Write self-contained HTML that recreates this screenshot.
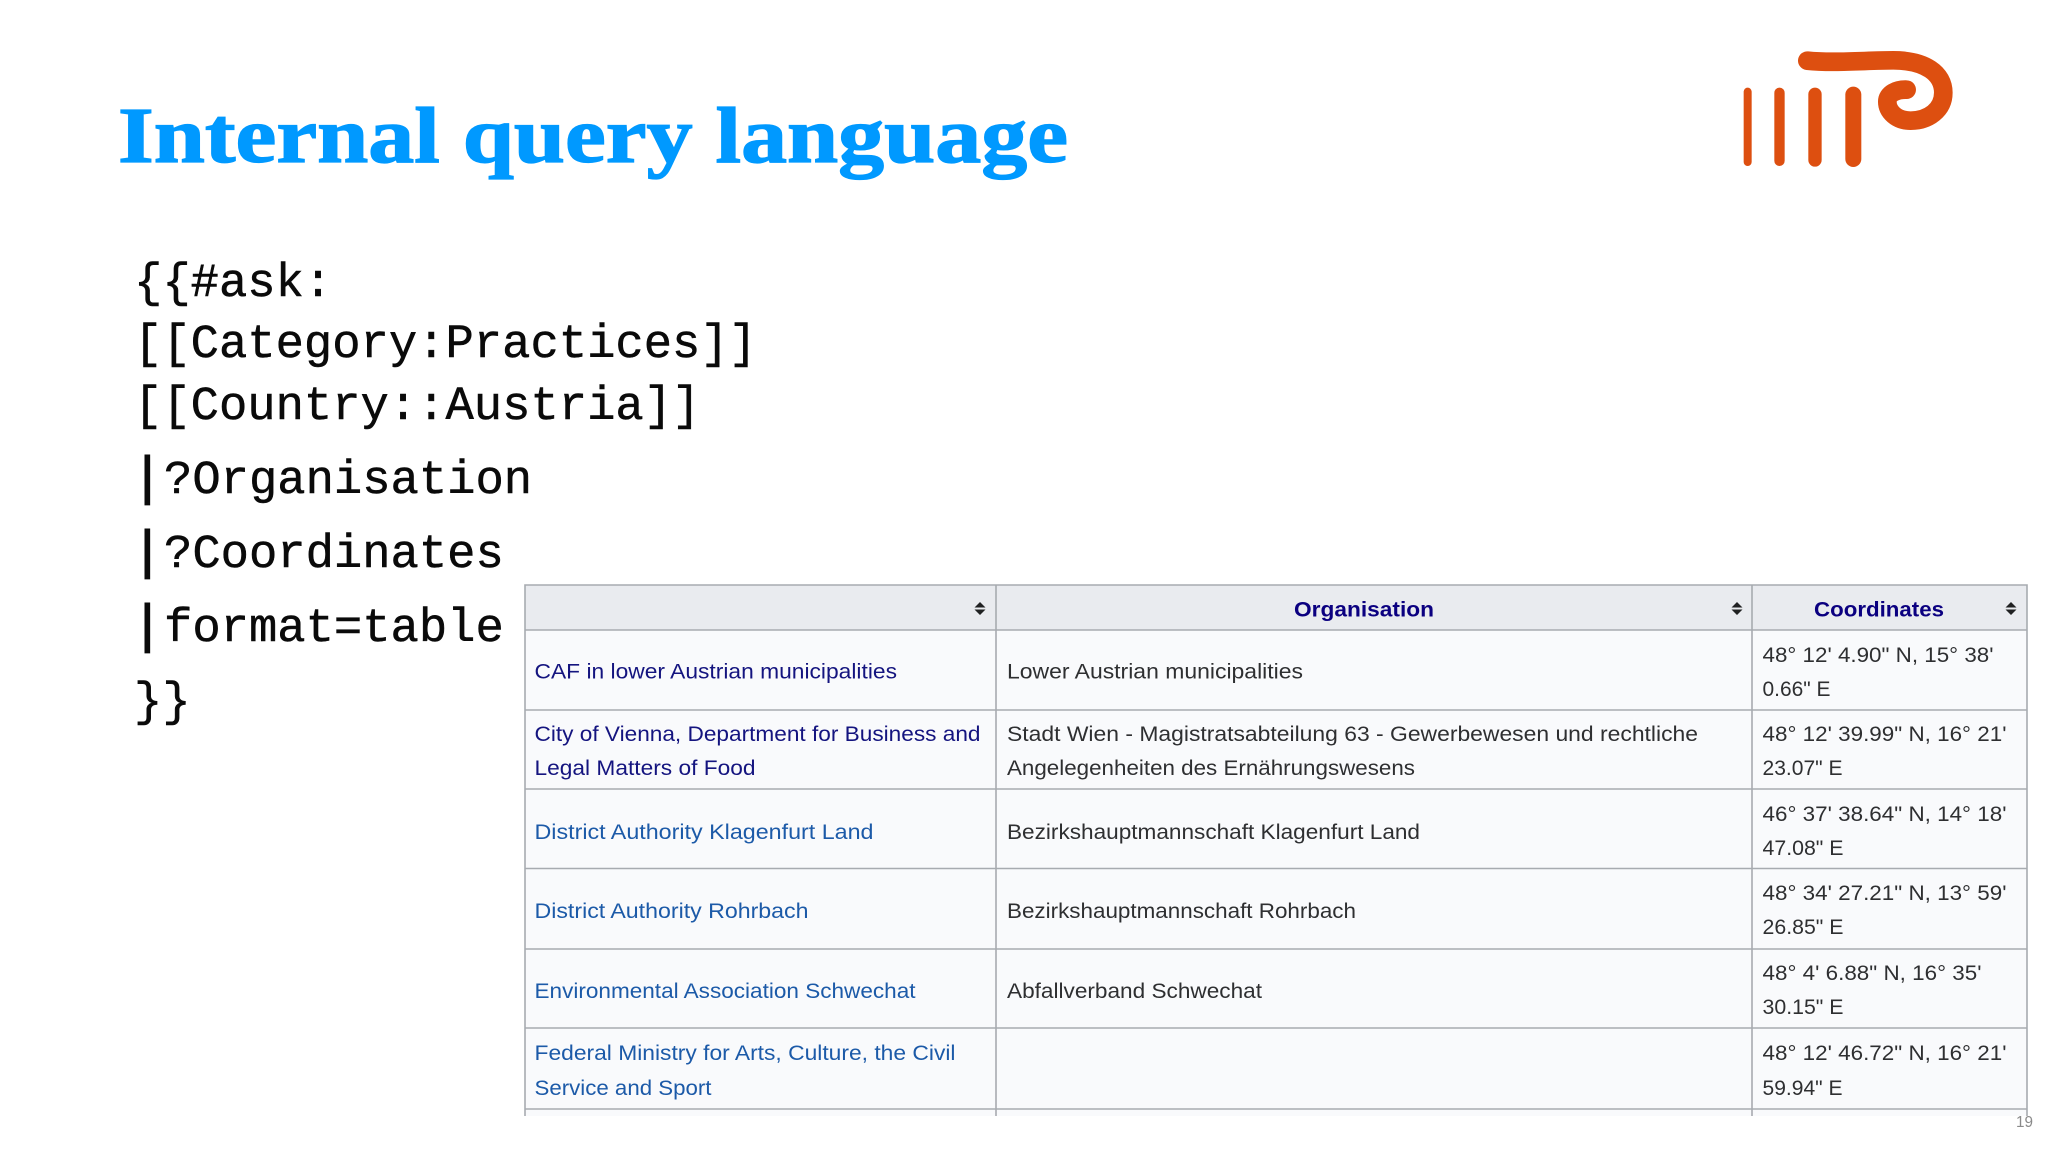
<!DOCTYPE html>
<html><head><meta charset="utf-8"><title>Internal query language</title>
<style>
html,body{margin:0;padding:0;background:#fff;width:2048px;height:1152px;overflow:hidden}
svg{display:block}
.t{font-family:"Liberation Serif",serif;font-weight:700;font-size:79px;fill:#0099ff;stroke:#0099ff;stroke-width:1.3px}
.c{font-family:"Liberation Mono",monospace;font-size:47.2px;fill:#0a0a0a;stroke:#0a0a0a;stroke-width:.5px}
.p{font-family:"DejaVu Sans Mono",monospace;font-size:51px;font-weight:700;fill:#0a0a0a}
.s{font-family:"Liberation Sans",sans-serif;font-size:21.5px;fill:#2e2f31}
.v{fill:#14147f}.l{fill:#1c5aa8}
.h{font-weight:700;fill:#0b0080}
</style></head><body>
<svg width="2048" height="1152" viewBox="0 0 2048 1152" xmlns="http://www.w3.org/2000/svg">
<rect width="2048" height="1152" fill="#fff"/>
<text class="t" x="118" y="162" textLength="950" lengthAdjust="spacingAndGlyphs">Internal query language</text>

<g transform="translate(1700,30) scale(.3333)">
<rect x="131" y="173" width="24" height="235" rx="12" fill="#dd4f10"/>
<rect x="223" y="173" width="31" height="235" rx="15.5" fill="#dd4f10"/>
<rect x="325" y="173" width="40" height="237" rx="20" fill="#dd4f10"/>
<rect x="436" y="170" width="48" height="241" rx="24" fill="#dd4f10"/>
<path d="M322 92C400 100 500 91 580 91C675 91 730 130 730 188C730 240 685 272 632 272C590 272 562 245 562 215C562 192 588 178 620 179" fill="none" stroke="#dd4f10" stroke-width="56" stroke-linecap="round" stroke-linejoin="round"/>
</g>

<text class="c" x="134" y="296">{{#ask:</text>
<text class="c" x="134" y="357">[[Category:Practices]]</text>
<text class="c" x="134" y="419">[[Country::Austria]]</text>
<text class="p" x="132" y="493">|</text>
<text class="c" x="164" y="493">?Organisation</text>
<text class="p" x="132" y="567">|</text>
<text class="c" x="164" y="567">?Coordinates</text>
<text class="p" x="132" y="641">|</text>
<text class="c" x="164" y="641">format=table</text>
<text class="c" x="134" y="715">}}</text>

<rect x="525" y="585" width="1502" height="531" fill="#f9fafc"/>
<rect x="525" y="585" width="1502" height="45" fill="#e9ebef"/>
<g stroke="#a7abb0" stroke-width="1.6" fill="none">
<path d="M525 1116V585H2027V1116"/>
<path d="M996 585V1116M1752 585V1116"/>
<path d="M525 630H2027M525 710H2027M525 789H2027M525 868.500H2027M525 949H2027M525 1028H2027M525 1109H2027"/>
</g>

<g fill="#202122">
<path d="M980 602l5.500 5.500h-11zM980 615l5.500-5.500h-11z"/>
<path d="M1737 602l5.500 5.500h-11zM1737 615l5.500-5.500h-11z"/>
<path d="M2011 602l5.500 5.500h-11zM2011 615l5.500-5.500h-11z"/>
</g>

<text class="s h" x="1294" y="616.500" textLength="140" lengthAdjust="spacingAndGlyphs">Organisation</text>
<text class="s h" x="1814" y="616.500" textLength="130" lengthAdjust="spacingAndGlyphs">Coordinates</text>

<text class="s v" x="534.500" y="678.500" textLength="362.500" lengthAdjust="spacingAndGlyphs">CAF in lower Austrian municipalities</text>
<text class="s v" x="534.500" y="741" textLength="446" lengthAdjust="spacingAndGlyphs">City of Vienna, Department for Business and</text>
<text class="s v" x="534.500" y="775" textLength="221" lengthAdjust="spacingAndGlyphs">Legal Matters of Food</text>
<text class="s l" x="534.500" y="839" textLength="339" lengthAdjust="spacingAndGlyphs">District Authority Klagenfurt Land</text>
<text class="s l" x="534.500" y="918" textLength="274" lengthAdjust="spacingAndGlyphs">District Authority Rohrbach</text>
<text class="s l" x="534.500" y="998" textLength="381" lengthAdjust="spacingAndGlyphs">Environmental Association Schwechat</text>
<text class="s l" x="534.500" y="1060" textLength="421" lengthAdjust="spacingAndGlyphs">Federal Ministry for Arts, Culture, the Civil</text>
<text class="s l" x="534.500" y="1095" textLength="177" lengthAdjust="spacingAndGlyphs">Service and Sport</text>

<text class="s" x="1007" y="678.500" textLength="296" lengthAdjust="spacingAndGlyphs">Lower Austrian municipalities</text>
<text class="s" x="1007" y="741" textLength="691" lengthAdjust="spacingAndGlyphs">Stadt Wien - Magistratsabteilung 63 - Gewerbewesen und rechtliche</text>
<text class="s" x="1007" y="775" textLength="408" lengthAdjust="spacingAndGlyphs">Angelegenheiten des Ernährungswesens</text>
<text class="s" x="1007" y="839" textLength="413" lengthAdjust="spacingAndGlyphs">Bezirkshauptmannschaft Klagenfurt Land</text>
<text class="s" x="1007" y="918" textLength="349" lengthAdjust="spacingAndGlyphs">Bezirkshauptmannschaft Rohrbach</text>
<text class="s" x="1007" y="998" textLength="255" lengthAdjust="spacingAndGlyphs">Abfallverband Schwechat</text>

<text class="s" x="1762.500" y="662" textLength="231" lengthAdjust="spacingAndGlyphs">48° 12' 4.90" N, 15° 38'</text>
<text class="s" x="1762.500" y="696" textLength="68" lengthAdjust="spacingAndGlyphs">0.66" E</text>
<text class="s" x="1762.500" y="741" textLength="244" lengthAdjust="spacingAndGlyphs">48° 12' 39.99" N, 16° 21'</text>
<text class="s" x="1762.500" y="775" textLength="80" lengthAdjust="spacingAndGlyphs">23.07" E</text>
<text class="s" x="1762.500" y="821" textLength="244" lengthAdjust="spacingAndGlyphs">46° 37' 38.64" N, 14° 18'</text>
<text class="s" x="1762.500" y="855" textLength="81" lengthAdjust="spacingAndGlyphs">47.08" E</text>
<text class="s" x="1762.500" y="900" textLength="244" lengthAdjust="spacingAndGlyphs">48° 34' 27.21" N, 13° 59'</text>
<text class="s" x="1762.500" y="934" textLength="81" lengthAdjust="spacingAndGlyphs">26.85" E</text>
<text class="s" x="1762.500" y="980" textLength="219" lengthAdjust="spacingAndGlyphs">48° 4' 6.88" N, 16° 35'</text>
<text class="s" x="1762.500" y="1014" textLength="81" lengthAdjust="spacingAndGlyphs">30.15" E</text>
<text class="s" x="1762.500" y="1060" textLength="244" lengthAdjust="spacingAndGlyphs">48° 12' 46.72" N, 16° 21'</text>
<text class="s" x="1762.500" y="1095" textLength="80" lengthAdjust="spacingAndGlyphs">59.94" E</text>

<text x="2016" y="1127" font-family="Liberation Sans, sans-serif" font-size="15.500" fill="#8a8a8a" textLength="17" lengthAdjust="spacingAndGlyphs">19</text>
</svg>
</body></html>
